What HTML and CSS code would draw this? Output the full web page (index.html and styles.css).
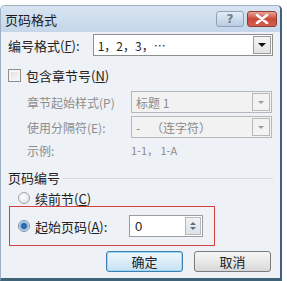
FILE: index.html
```html
<!DOCTYPE html>
<html lang="zh-CN">
<head>
    <meta charset="UTF-8">
    <title>页码格式</title>
    <link rel="stylesheet" href="styles.css">
</head>
<body>
    <div class="dialog">
        <div class="titlebar">
            <span class="title">页码格式</span>
            <div class="caption-buttons">
                <span class="btn-help">?</span>
                <span class="btn-close">
                    <svg width="14" height="10" viewBox="0 0 14 10"><path d="M2 1 L12 9 M12 1 L2 9" stroke="#fff" stroke-width="2.6" stroke-linecap="round"/></svg>
                </span>
            </div>
        </div>

        <div class="body">
            <div class="row row-format">
                <span class="label format-label">编号格式(<u>F</u>):</span>
                <div class="combo combo-wide">
                    <span class="combo-text">1，2，3，…</span>
                    <span class="combo-arrow"></span>
                </div>
            </div>

            <div class="row row-check">
                <span class="checkbox"></span>
                <span>包含章节号(<u>N</u>)</span>
            </div>

            <div class="row row-sub row-first">
                <span class="label sub-label">章节起始样式(P)</span>
                <div class="combo combo-disabled">
                    <span class="combo-text">标题 1</span>
                    <span class="combo-arrow"></span>
                </div>
            </div>

            <div class="row row-sub">
                <span class="label sub-label">使用分隔符(E):</span>
                <div class="combo combo-disabled">
                    <span class="combo-text">-    （连字符）</span>
                    <span class="combo-arrow"></span>
                </div>
            </div>

            <div class="row row-sample">
                <span class="label sub-label">示例:</span>
                <span class="sample">1-1， 1-A</span>
            </div>

            <div class="group-title">
                <span>页码编号</span>
                <span class="group-line"></span>
            </div>

            <div class="row row-radio">
                <span class="radio"></span>
                <span>续前节(<u>C</u>)</span>
            </div>

            <div class="highlight">
                <div class="row row-radio">
                    <span class="radio radio-on"></span>
                    <span class="label start-label">起始页码(<u>A</u>):</span>
                    <div class="spin">
                        <span class="spin-text">0</span>
                        <span class="spin-buttons">
                            <span class="spin-up"></span>
                            <span class="spin-down"></span>
                        </span>
                    </div>
                </div>
            </div>

            <div class="actions">
                <button class="btn btn-default">确定</button>
                <button class="btn">取消</button>
            </div>
        </div>
    </div>
</body>
</html>
```

FILE: styles.css
```css
* {
    margin: 0;
    padding: 0;
    box-sizing: border-box;
}

body {
    background-color: #fff;
    font-family: "Noto Sans CJK SC", "Liberation Sans", sans-serif;
    font-size: 13px;
    color: #222;
    width: 287px;
    height: 281px;
    overflow: hidden;
    padding-top: 5px;
}

u {
    text-decoration: underline;
}

.dialog {
    width: 282px;
    height: 276px;
    border: 1px solid #9db0c4;
    border-right: 2px solid #41607e;
    border-bottom: 3px solid #3f6378;
    border-radius: 5px 5px 0 0;
    background-color: #eef1f5;
    display: flex;
    flex-direction: column;
}

.titlebar {
    height: 26px;
    flex-shrink: 0;
    background: linear-gradient(to bottom, #d8e4f0, #c4d6e9);
    display: flex;
    align-items: center;
    justify-content: space-between;
    padding: 0 3px 0 4px;
    border-radius: 4px 4px 0 0;
}

.title {
    font-size: 13px;
    color: #1c1c1c;
}

.caption-buttons {
    display: flex;
    gap: 3px;
}

.btn-help {
    width: 28px;
    height: 16px;
    border: 1px solid #8ca3bb;
    border-radius: 3px;
    background: linear-gradient(to bottom, #e3ecf5, #b9cde2);
    color: #6f7f8f;
    font-family: "DejaVu Sans", sans-serif;
    font-size: 12px;
    font-weight: bold;
    line-height: 14px;
    text-align: center;
}

.btn-close {
    width: 30px;
    height: 16px;
    border: 1px solid #8e3b35;
    border-radius: 3px;
    background: linear-gradient(to bottom, #e8a595, #c9493a 50%, #d3604c);
    display: flex;
    align-items: center;
    justify-content: center;
}

.body {
    flex: 1;
    padding: 2px 7px 0 7px;
    display: flex;
    flex-direction: column;
}

.row {
    display: flex;
    align-items: center;
    flex-shrink: 0;
}

.row-format {
    height: 22px;
}

.format-label {
    width: 85px;
}

.combo {
    height: 22px;
    border: 1px solid #8e8f8f;
    background-color: #fff;
    display: flex;
    align-items: center;
    justify-content: space-between;
    padding-left: 4px;
}

.combo-wide {
    width: 181px;
}

.combo-text {
    font-family: "Noto Sans CJK SC", "DejaVu Sans", sans-serif;
    font-size: 12px;
    white-space: pre;
}

.combo-arrow {
    width: 18px;
    height: 18px;
    margin-right: 1px;
    border: 1px solid #9a9a9a;
    background: linear-gradient(to bottom, #f5f5f5, #e3e3e3);
    position: relative;
}

.combo-arrow::after {
    content: "";
    position: absolute;
    left: 4px;
    top: 6px;
    border-left: 4px solid transparent;
    border-right: 4px solid transparent;
    border-top: 4px solid #111;
}

.combo-disabled {
    width: 141px;
    border-color: #b7b7b7;
    background-color: #f2f2f2;
    color: #8a8a8a;
}

.combo-disabled .combo-arrow {
    border-color: #b8b8b8;
    background: #f3f3f3;
}

.combo-disabled .combo-arrow::after {
    border-top-color: #9c9c9c;
    border-left-width: 3px;
    border-right-width: 3px;
    border-top-width: 3px;
    left: 5px;
    top: 7px;
}

.row-check {
    height: 18px;
    margin-top: 10px;
    gap: 5px;
}

.checkbox {
    width: 13px;
    height: 13px;
    border: 1px solid #8f8f8f;
    background: linear-gradient(135deg, #dcdcdc, #fbfbfb);
    box-shadow: inset 0 0 0 2px #f4f4f4;
}

.row-sub {
    height: 22px;
    margin-top: 3px;
    padding-left: 19px;
}

.row-first {
    margin-top: 7px;
}

.sub-label {
    width: 104px;
    font-size: 12px;
    color: #8d8d8d;
}

.row-sample {
    height: 18px;
    margin-top: 3px;
    padding-left: 19px;
}

.sample {
    font-size: 11px;
    color: #8d8d8d;
}

.group-title {
    display: flex;
    align-items: center;
    gap: 3px;
    height: 18px;
    margin-top: 9px;
    flex-shrink: 0;
}

.group-line {
    flex: 1;
    height: 1px;
    margin-top: 2px;
    background-color: #d5dae0;
}

.row-radio {
    height: 16px;
    margin-top: 4px;
    padding-left: 10px;
    gap: 5px;
}

.radio {
    width: 12px;
    height: 12px;
    border-radius: 50%;
    border: 1px solid #a1a7ae;
    background: radial-gradient(circle at 40% 40%, #fff, #d8dde2);
}

.radio-on {
    background: radial-gradient(circle, #3f7bc0 0, #1d5a9f 2px, #9ec5ea 4px, #e6eef6 5px);
    border-color: #7c8fa2;
}

.highlight {
    margin-left: 1px;
    width: 206px;
    height: 40px;
    flex-shrink: 0;
    border: 1px solid #d0413f;
    display: flex;
    align-items: center;
}

.highlight .row-radio {
    margin-top: 0;
    height: 22px;
    padding-left: 8px;
}

.start-label {
    width: 89px;
}

.spin {
    width: 74px;
    height: 22px;
    border: 1px solid #9a9da1;
    background-color: #fff;
    display: flex;
    align-items: center;
    justify-content: space-between;
    padding-left: 5px;
}

.spin-text {
    font-family: "Liberation Sans", sans-serif;
    font-size: 13px;
}

.spin-buttons {
    width: 16px;
    height: 18px;
    margin-right: 1px;
    border: 1px solid #b4b9be;
    background: linear-gradient(to bottom, #f1f3f5, #dde2e7);
    display: flex;
    flex-direction: column;
    align-items: center;
    justify-content: center;
    gap: 2px;
}

.spin-up {
    border-left: 3px solid transparent;
    border-right: 3px solid transparent;
    border-bottom: 3px solid #5a6e84;
}

.spin-down {
    border-left: 3px solid transparent;
    border-right: 3px solid transparent;
    border-top: 3px solid #5a6e84;
}

.actions {
    display: flex;
    justify-content: flex-end;
    gap: 11px;
    margin-top: 5px;
    padding-right: 2px;
    flex-shrink: 0;
}

.btn {
    width: 77px;
    height: 21px;
    border: 1px solid #7a7a7a;
    border-radius: 3px;
    background: linear-gradient(to bottom, #f6f6f6, #e8e8e8 50%, #d8d8d8);
    font-family: "Noto Sans CJK SC", sans-serif;
    font-size: 13px;
    color: #222;
    line-height: 18px;
}

.btn-default {
    border-color: #3c7fb1;
    box-shadow: inset 0 0 0 1px #9fd7f2;
    background: linear-gradient(to bottom, #eef7fc, #dcedf8 50%, #c3e1f3);
}
```
